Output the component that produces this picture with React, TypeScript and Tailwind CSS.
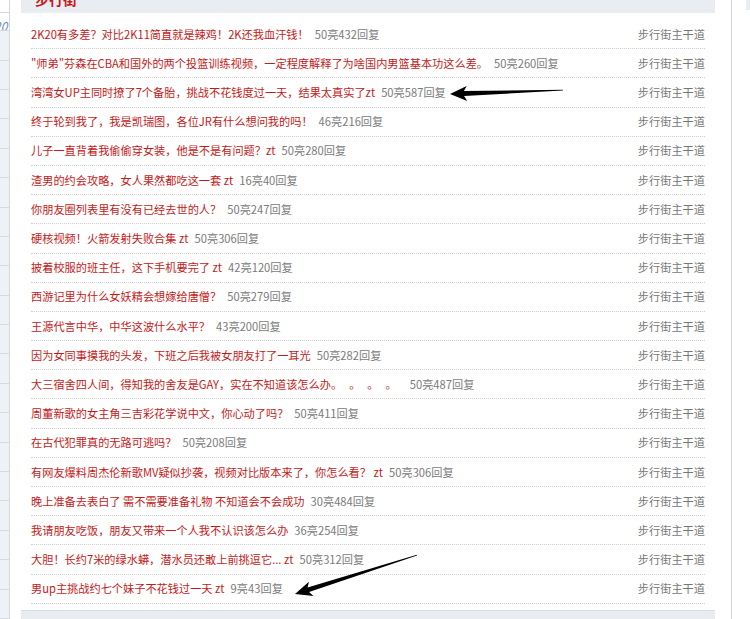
import type { ReactNode } from "react";

type Post = {
  title: string;
  tail?: string;
  zt?: boolean;
  ztGap?: boolean;
  light: number;
  reply: number;
};

const posts: Post[] = [
  { title: "2K20有多差？对比2K11简直就是辣鸡！2K还我血汗钱！", light: 50, reply: 432 },
  { title: "\"师弟\"芬森在CBA和国外的两个投篮训练视频，一定程度解释了为啥国内男篮基本功这么差。", light: 50, reply: 260 },
  { title: "湾湾女UP主同时撩了7个备胎，挑战不花钱度过一天，结果太真实了", zt: true, light: 50, reply: 587 },
  { title: "终于轮到我了，我是凯瑞图，各位JR有什么想问我的吗！", light: 46, reply: 216 },
  { title: "儿子一直背着我偷偷穿女装，他是不是有问题？", zt: true, light: 50, reply: 280 },
  { title: "渣男的约会攻略，女人果然都吃这一套", zt: true, ztGap: true, light: 16, reply: 40 },
  { title: "你朋友圈列表里有没有已经去世的人？", light: 50, reply: 247 },
  { title: "硬核视频！火箭发射失败合集", zt: true, ztGap: true, light: 50, reply: 306 },
  { title: "披着校服的班主任，这下手机要完了", zt: true, ztGap: true, light: 42, reply: 120 },
  { title: "西游记里为什么女妖精会想嫁给唐僧？", light: 50, reply: 279 },
  { title: "王源代言中华，中华这波什么水平？", light: 43, reply: 200 },
  { title: "因为女同事摸我的头发，下班之后我被女朋友打了一耳光", light: 50, reply: 282 },
  { title: "大三宿舍四人间，得知我的舍友是GAY，实在不知道该怎么办", tail: "。。。。", light: 50, reply: 487 },
  { title: "周董新歌的女主角三吉彩花学说中文，你心动了吗？", light: 50, reply: 411 },
  { title: "在古代犯罪真的无路可逃吗？", light: 50, reply: 208 },
  { title: "有网友爆料周杰伦新歌MV疑似抄袭，视频对比版本来了，你怎么看？", zt: true, ztGap: true, light: 50, reply: 306 },
  { title: "晚上准备去表白了 需不需要准备礼物 不知道会不会成功", light: 30, reply: 484 },
  { title: "我请朋友吃饭，朋友又带来一个人我不认识该怎么办", light: 36, reply: 254 },
  { title: "大胆！长约7米的绿水蟒，潜水员还敢上前挑逗它...", zt: true, ztGap: true, light: 50, reply: 312 },
  { title: "男up主挑战约七个妹子不花钱过一天", zt: true, ztGap: true, light: 9, reply: 43 },
];

function SectionHead({ children, className }: { children: ReactNode; className?: string }) {
  return (
    <div className={`flex items-center h-[28px] bg-[#e9edf1] pl-[14px] ${className ?? ""}`}>
      <span className="text-[14px] font-bold text-[#c41a1a]">{children}</span>
    </div>
  );
}

function PostRow({ post }: { post: Post }) {
  return (
    <li className="flex items-center justify-between h-[29.2px] border-b border-dotted border-[#cfcfcf]">
      <div className="whitespace-nowrap">
        <span className="text-[#c41a1a]">{post.title}</span>
        {post.tail && <span className="text-[#c41a1a] tracking-[7px]">{post.tail}</span>}
        {post.zt && <span className="text-[#c41a1a]">{post.ztGap ? " zt" : "zt"}</span>}
        <span className="ml-[6px] text-[#7b7b7b]">
          {post.light}亮{post.reply}回复
        </span>
      </div>
      <span className="text-[#777]">步行街主干道</span>
    </li>
  );
}

function Arrow({ x, y, len, angle }: { x: number; y: number; len: number; angle: number }) {
  return (
    <polygon
      transform={`translate(${x} ${y}) rotate(${angle})`}
      points={`0,0 17,-7.5 14,-2.4 ${len},-0.4 ${len},0.4 14,2.4 17,7.5`}
      fill="#000"
    />
  );
}

export default function App() {
  return (
    <div
      lang="zh-CN"
      className="relative flex h-[619px] w-[750px] overflow-hidden bg-white text-[11.2px] [text-spacing-trim:space-all]"
      style={{ fontFamily: '"Noto Sans CJK SC", "Noto Sans", sans-serif' }}
    >
      <aside className="w-[10px] shrink-0 border-r border-[#d3d9e1] flex flex-col">
        <div className="h-[16px] border-b border-[#d3d9e1]" />
        <div className="h-[24px] border-b border-[#d3d9e1] overflow-hidden">
          <span className="block -ml-[6px] mt-[4px] italic text-[12px] text-[#6f8db5]">20</span>
        </div>
        {Array.from({ length: 20 }).map((_, i) => (
          <div key={i} className="h-[29.4px] shrink-0 border-b border-[#d3d9e1] bg-[#eef2f6]" />
        ))}
      </aside>

      <main className="w-[722px] shrink-0 border-r border-[#d6d6d6] pl-[11px] pr-[16px]">
        <SectionHead className="-mt-[15px]">步行街</SectionHead>
        <ul className="px-[10px] pt-[7px]">
          {posts.map((p, i) => (
            <PostRow key={i} post={p} />
          ))}
        </ul>
        <SectionHead className="mt-[6px] border-t border-[#d8dde3] items-start pt-[4px]">步行街热帖</SectionHead>
      </main>

      <div className="flex-1 pl-[14px]">
        <div className="h-[10px] bg-[#e9edf1]" />
      </div>

      <svg className="pointer-events-none absolute inset-0" width="750" height="619">
        <Arrow x={450} y={94} len={113} angle={-2} />
        <Arrow x={295} y={594} len={128} angle={-17.7} />
      </svg>
    </div>
  );
}
